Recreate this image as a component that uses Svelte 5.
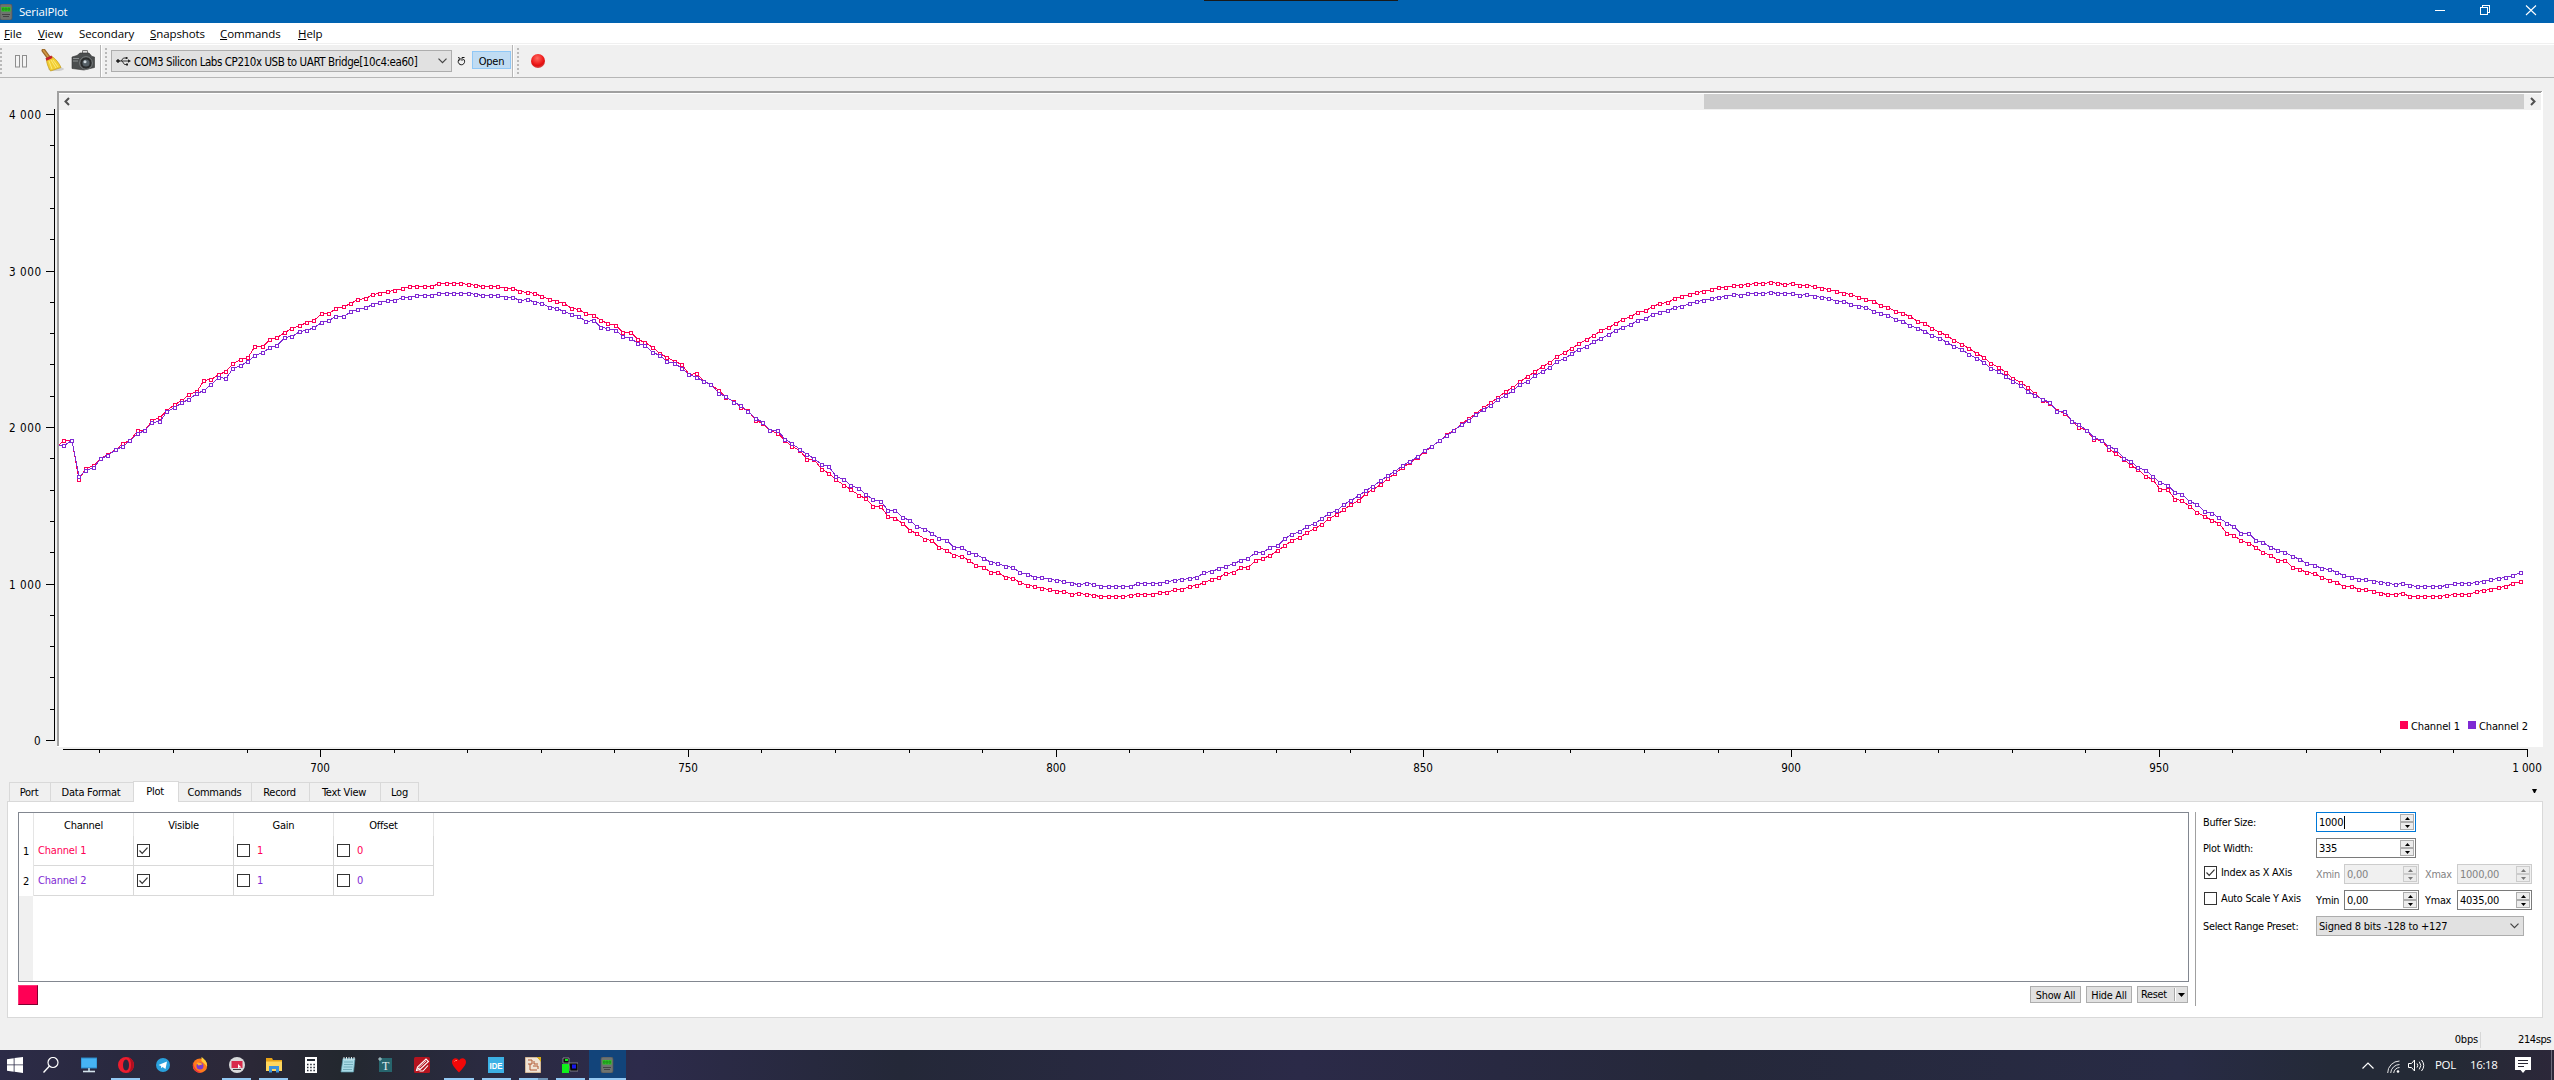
<script>
  const RED = '#ff0055';
  const PURPLE = '#7f2ad4';

  const menu = [
    ['F', 'ile', 34], ['V', 'iew', 41], ['', 'Secondary', 71],
    ['S', 'napshots', 70], ['C', 'ommands', 78], ['H', 'elp', 40]
  ];
  const tabs = [
    ['Port', 41], ['Data Format', 83], ['Plot', 46], ['Commands', 73],
    ['Record', 58], ['Text View', 71], ['Log', 39]
  ];
  const channels = [
    { id: 1, name: 'Channel 1', cls: 'red' },
    { id: 2, name: 'Channel 2', cls: 'purple' }
  ];

  // Recorded blocks: first sample index, base line, offsets in thirds of a pixel.
  const redBlocks = [
    [665, 240, '603 603 719 688 678 658 646 631 611 602 573 572 543 534 513 495 483 465 457 423 419 405 396 372 360 354 321 322 300 294 279 267 258 249 243 222 222 207 201 192 180 177 165 162 156 153 147 141 141 141 141 132 132 132 132 135 138 141 141 141 147 147 156 159 162 171 180 186 192 207 210 222 228 243 252 258 279 279 300'],
    [744, 270, '219 234 252 264 276 285 314 312 336 345 363 384 396 414 423 453 462 483 492 513 531 543 570 570 600 612 630 648 660 678 687 711 711 741 747 762 783 792 810 813 834 843 858 861 873 888 894 909 909 924 927 939 948 951 957 960 966 966 975 972 975 978 981 981 981 981 978 975 975 975 969 969 960 960 951 948 939 930 924 912 909 894 894 873 867 858 843'],
    [934, 400, '3 12 33 42 66 84 93 120 123 150 162 180 198 210 231 240 270 270 300 303 321 339 351 363 372 402 408 423 432 444 459 468 483 483 504 510 519 522 534 543 549 561 561 570 570 576 582 585 585 582 591 591 591 591 591 588 585 585 585 576 573 570 564 561 552 546']
  ];
  const purpleBlocks = [
    [665, 240, '618 603 711 693 684 657 648 630 621 603 582 573 549 546 516 504 489 480 462 453 435 414 417 387 378 366 348 339 324 318 294 291 276 273 264 249 243 231 231 216 210 204 195 189 183 183 174 174 168 168 168 162 162 162 162 162 165 168 168 168 174 174 183 180 189 192 204 207 216 225 231 246 243 264 267 273 291 297 312'],
    [744, 270, '228 249 258 276 282 297 315 324 336 345 372 381 399 408 426 447 459 483 483 510 522 540 555 567 585 591 621 630 648 657 675 690 696 723 723 744 753 771 780 792 807 813 834 834 849 855 867 879 882 891 894 909 915 924 924 930 933 936 942 945 942 945 951 951 951 951 951 942 942 942 942 936 933 930 927 924 909 906 897 891 882 873 867 849 849 834 828'],
    [934, 400, '0 9 36 36 66 75 93 114 123 141 150 177 186 204 213 231 249 258 279 285 306 315 336 342 354 372 381 402 402 423 429 444 453 459 471 480 492 498 507 510 519 528 534 540 540 546 549 552 555 552 558 561 561 561 561 558 552 552 552 549 546 540 537 534 528 519']
  ];

  const px = (i) => Math.round(64.2 + (i - 665) * 7.355);

  function series(blocks, centre, amp, seed) {
    const known = new Map();
    for (const [start, base, text] of blocks) {
      text.split(' ').forEach((v, k) => known.set(start + k, Math.round(base + v / 3)));
    }
    const pts = [];
    for (let i = 665; i < 1000; i++) {
      const wobble = Math.sin(i * 2.4 + seed) * 0.6;
      const y = known.get(i) ?? Math.round(centre - amp * Math.cos((2 * Math.PI * (i - 896.9)) / 179) + wobble);
      pts.push([px(i), y]);
    }
    return pts;
  }

  const plots = [
    { colour: RED, start: 446, pts: series(redBlocks, 440.3, 156.5, 0) },
    { colour: PURPLE, start: 446, pts: series(purpleBlocks, 440.2, 146.5, 1) }
  ];
  const line = (p) => [[58, p.start], ...p.pts].map(([x, y]) => `${x},${y - 0.5}`).join(' ');
  const marks = (p) => p.pts.map(([x, y]) => `M${x - 1.5} ${y - 1.5}h3v3h-3z`).join('');

  const yTicks = Array.from({ length: 21 }, (_, k) => ({ y: Math.round(740 - k * 31.3) + 0.5, major: k % 5 === 0, v: k / 5 }));
  const xTicks = Array.from({ length: 34 }, (_, k) => {
    const v = 670 + k * 10;
    return { x: Math.round(62.7 + (v - 665) * 7.355) + 0.5, major: v % 50 === 0, v };
  });

  const taskIcons = [
    ['start'], ['search'], ['pc'], ['opera', 1], ['telegram'], ['firefox'], ['rec', 1], ['folder', 1],
    ['calc'], ['notes'], ['t'], ['pen'], ['heart', 1], ['ide', 1], ['eda', 2], ['term', 1], ['serial', 3]
  ];
</script>

{#snippet check(on)}
  <svg class="check" width="13" height="13" viewBox="0 0 13 13">
    <rect x=".5" y=".5" width="12" height="12" fill="#fff" stroke="#333" />
    {#if on}<path d="M2.5 6.5l2.7 2.8L10.5 3.6" fill="none" stroke="#333" stroke-width="1.2" />{/if}
  </svg>
{/snippet}

{#snippet spin(value, cls)}
  <div class="spin {cls}">
    <span>{value}{#if cls === 'focus wide'}<i class="caret"></i>{/if}</span>
    <div class="arrows">
      <b><svg width="5" height="3"><path d="M0 3L2.5 0L5 3z" /></svg></b>
      <b><svg width="5" height="3"><path d="M0 0L2.5 3L5 0z" /></svg></b>
    </div>
  </div>
{/snippet}

{#snippet meter()}
  <rect x="2" y="0" width="12" height="16" rx="2" fill="#6f7470" stroke="#555" stroke-width=".7" />
  <rect x="3.500" y="3" width="9" height="4.500" fill="#2fc626" />
  <path d="M4.500 4.200h1.500v2H4.500zM7.200 4.200h1.500v2H7.200zM10 4.200h1.500v2H10z" fill="none" stroke="#1a7a18" stroke-width=".6" />
  <path d="M4 10.500h8M5 12.500h6" stroke="#444" stroke-width="1.200" />
{/snippet}

<div class="window">
  <header class="title">
    <svg class="appicon" width="13" height="16" viewBox="2 0 13 16">{@render meter()}</svg>
    <span>SerialPlot</span>
    <i class="strip"></i>
    <svg class="winbtns" width="110" height="23" viewBox="0 0 110 23" fill="none" stroke="#fff" shape-rendering="crispEdges">
      <path d="M4 10.5h10" />
      <path d="M49.5 7.5h7v7h-7zM51.5 7V5.5h7v7H57" />
      <path d="M95 5.500l10 9.500M105 5.500l-10 9.500" shape-rendering="auto" stroke-width="1.1" />
    </svg>
  </header>

  <nav class="menu">
    {#each menu as [u, rest, w]}
      <span class="item" style="width:{w}px"><u>{u}</u>{rest}</span>
    {/each}
  </nav>

  <div class="toolbar">
    <div class="bar first">
      <i class="grip"></i>
      <svg class="pause" width="13" height="13" viewBox="0 0 13 13" fill="#f4f4f4" stroke="#8e8e8e"><rect x=".5" y=".5" width="4" height="11.500" /><rect x="7.500" y=".5" width="4" height="11.500" /></svg>
      <svg class="broom" width="23" height="23" viewBox="0 0 23 23">
        <ellipse cx="15" cy="20" rx="8" ry="2" fill="#cfcfcf" />
        <path d="M2.500 1.500L8 9" stroke="#9c6a2a" stroke-width="4" stroke-linecap="round" />
        <path d="M2.500 1.500L7 7.500" stroke="#d49a45" stroke-width="1.5" stroke-linecap="round" />
        <path d="M5.500 10L11 7.500C15 10 18 14 20 18.500L9.500 22C7 18 5.500 14 5.500 10z" fill="#f1cd33" stroke="#c39a16" stroke-width=".7" />
        <path d="M8 12l3 8M10 11l5 8M12 11l5 7" stroke="#fff08a" stroke-width=".8" />
        <path d="M5 10.500L11 7.800" stroke="#c2222a" stroke-width="2.600" />
      </svg>
      <svg class="camera" width="24" height="23" viewBox="0 0 24 23">
        <path d="M11.500 5V1.500h5V5" fill="#ddd" stroke="#777" />
        <path d="M1 8l5-1.500L9 4h9l3 3.500 2.500.5v10.500L13 21 1 19.500z" fill="#4b4e4f" stroke="#333" stroke-width=".6" />
        <path d="M2 9.500h6M2 12h5" stroke="#8b8f90" />
        <circle cx="15" cy="14" r="6.300" fill="#2b2d2e" stroke="#7f8485" />
        <circle cx="15" cy="14" r="3.600" fill="#555f66" />
        <circle cx="14" cy="12.800" r="1.500" fill="#cfd8dd" />
      </svg>
    </div>
    <div class="bar second">
      <i class="grip"></i>
      <div class="combo port">
        <svg class="usb" width="15" height="9" viewBox="0 0 15 9" fill="none" stroke="#222"><circle cx="2" cy="4" r="1.300" fill="#222" /><path d="M2 4h10M5 4l2.500-3h2M6 4l2.500 3.500h2" stroke-width=".9" /><path d="M12 2.300L15 4l-3 1.700z" fill="#222" stroke="none" /><path d="M9.500 0h2v2h-2zM10 6.500h2v2h-2z" fill="#222" stroke="none" /></svg>
        <span>COM3 Silicon Labs CP210x USB to UART Bridge[10c4:ea60]</span>
        <svg class="chev" width="9" height="6" viewBox="0 0 9 6"><path d="M.5.700l4 4 4-4" fill="none" stroke="#444" stroke-width="1.200" /></svg>
      </div>
      <svg class="reload" width="9" height="10" viewBox="0 0 9 10"><path d="M6.300 3A3.200 3.200 0 1 1 2.500 3M1 1.500l2.200.9-.5 2.200M5 4.800V1.500h2.500" fill="none" stroke="#111" /></svg>
      <span class="open">Open</span>
    </div>
    <div class="bar third">
      <i class="grip"></i>
      <i class="record"></i>
    </div>
  </div>

  <svg class="plot" width="2554" height="703" viewBox="0 78 2554 703" shape-rendering="crispEdges">
    <rect x="57" y="91" width="2486" height="656" fill="#fff" />
    <path d="M57 91h2485v1h-2483v654h-2z" fill="#a0a0a0" />
    <path d="M59 92h2482v1H59z" fill="#a0a0a0" />
    <rect x="59" y="94" width="2482" height="16" fill="#f0f0f0" />
    <rect x="1704" y="94" width="820" height="15" fill="#cdcdcd" />
    <path d="M69 98l-3.500 3.500L69 105M2531 98l3.500 3.500L2531 105" fill="none" stroke="#505050" stroke-width="2" shape-rendering="auto" />
    <path d="M54.500 109V741M63 749.500H2528" stroke="#000" />
    {#each yTicks as t}
      <path d="M{t.major ? 46 : 50} {t.y}H54" stroke="#000" />
      {#if t.major && t.v}<text class="ax" x="9" y={t.y + 4.500} textLength="32">{t.v} 000</text>{/if}
    {/each}
    <text class="ax" x="34" y="745">0</text>
    {#each xTicks as t}
      <path d="M{t.x} 749V{t.major ? 757 : 753}" stroke="#000" />
      {#if t.major}<text class="ax" x={t.x - 0.5} y="772" text-anchor="middle">{t.v === 1000 ? '1 000' : t.v}</text>{/if}
    {/each}
    {#each plots as p}
      <polyline points={line(p)} fill="none" stroke={p.colour} />
      <path d={marks(p)} fill="#fff" stroke={p.colour} />
    {/each}
    <rect x="57" y="110" width="2" height="636" fill="#a0a0a0" />
    <rect x="2400" y="721" width="8" height="8" fill={RED} />
    <rect x="2468" y="721" width="8" height="8" fill={PURPLE} />
    <text class="lg" x="2411" y="730" textLength="49">Channel 1</text>
    <text class="lg" x="2479" y="730" textLength="49">Channel 2</text>
  </svg>

  <div class="tabs">
    {#each tabs as [t, w]}
      <span class="tab" class:sel={t === 'Plot'} style="width:{w}px">{t}</span>
    {/each}
    <svg class="more" width="5" height="4"><path d="M0 0h5L3 4H2z" /></svg>
  </div>

  <section class="pane">
    <div class="left">
      <div class="table">
        <div class="row head"><b></b><span>Channel</span><span>Visible</span><span>Gain</span><span>Offset</span></div>
        {#each channels as c}
          <div class="row body {c.cls}">
            <b>{c.id}</b><span><em class="name">{c.name}</em></span><span>{@render check(true)}</span>
            <span>{@render check(false)}<em>1</em></span><span>{@render check(false)}<em>0</em></span>
          </div>
        {/each}
        <i class="gutter"></i>
      </div>
      <div class="actions">
        <i class="swatch"></i>
        <span class="btn show">Show All</span>
        <span class="btn hide">Hide All</span>
        <span class="btn reset">Reset<i></i><svg width="7" height="4"><path d="M0 0h7L3.500 4z" /></svg></span>
      </div>
    </div>
    <div class="form">
      <div class="frow"><label>Buffer Size:</label>{@render spin('1000', 'focus wide')}</div>
      <div class="frow"><label>Plot Width:</label>{@render spin('335', 'wide')}</div>
      <div class="frow dis"><label class="cb">{@render check(true)}Index as X AXis</label><label class="mm">Xmin</label>{@render spin('0,00', 'off')}<label class="mx">Xmax</label>{@render spin('1000,00', 'off')}</div>
      <div class="frow"><label class="cb">{@render check(false)}Auto Scale Y Axis</label><label class="mm">Ymin</label>{@render spin('0,00', '')}<label class="mx">Ymax</label>{@render spin('4035,00', '')}</div>
      <div class="frow"><label>Select Range Preset:</label>
        <div class="combo preset"><span>Signed 8 bits -128 to +127</span><svg class="chev" width="9" height="6" viewBox="0 0 9 6"><path d="M.5.700l4 4 4-4" fill="none" stroke="#444" stroke-width="1.200" /></svg></div>
      </div>
    </div>
  </section>

  <footer class="status"><span class="bps">0bps</span><span class="sps">214sps</span></footer>

  <div class="taskbar">
    <div class="apps">
      {#each taskIcons as [name, run]}
        <div class="app" class:run={run === 1 || run === 2} class:split={run === 2} class:active={run === 3}>
          <svg width="16" height="16" viewBox="0 0 16 16">
            {#if name === 'start'}
              <path d="M0 2.200L6.700 1.200v6.300H0zM7.500 1.100L16 0v7.500H7.500zM0 8.300h6.700v6.400L0 13.800zM7.500 8.300H16V16l-8.500-1.200z" fill="#fff" />
            {:else if name === 'search'}
              <circle cx="10" cy="5.500" r="5" fill="none" stroke="#fff" stroke-width="1.200" /><path d="M6.500 9L.5 15.500" stroke="#fff" stroke-width="1.400" />
            {:else if name === 'pc'}
              <rect x="0" y="1" width="16" height="10" fill="#46b4f4" stroke="#2a86c4" /><path d="M7 11h2v3H7z" fill="#9db8c8" /><path d="M2 14.500h12" stroke="#d5e3ec" stroke-width="1.600" />
            {:else if name === 'opera'}
              <path d="M8 0a8 8 0 0 0 0 16a8 8 0 0 0 0-16zM8 2.500c2 0 3 2.500 3 5.500s-1 5.500-3 5.500-3-2.500-3-5.500 1-5.500 3-5.500z" fill="#ee1d2e" fill-rule="evenodd" /><path d="M10 .3a8 8 0 0 1 0 15.400c2-1.500 3-4.200 3-7.700s-1-6.200-3-7.700z" fill="#b00f1f" />
            {:else if name === 'telegram'}
              <circle cx="8" cy="8" r="7" fill="#2aa0dc" /><path d="M3.500 8l8.500-3.500-1.500 7.500-3-2-1.300 1.300-.2-2.300z" fill="#fff" />
            {:else if name === 'firefox'}
              <circle cx="8" cy="8.700" r="7.200" fill="#ff7a1c" /><path d="M9.500 0c3 2 6 5 5.500 9.500C13 7 11 5 9.500 4z" fill="#ffce3a" /><path d="M1 5c1 7 4 9 9 10.800C4 16.500 0 12 1 5z" fill="#f0303f" /><circle cx="8" cy="9" r="3.500" fill="#7a3bd0" /><path d="M4.500 6c3-1 5 0 6 1.500-2 0-2.500 1-4 1z" fill="#ffb02e" />
            {:else if name === 'rec'}
              <circle cx="8" cy="8" r="8" fill="#d9dadb" /><rect x="2.500" y="4" width="11" height="7" fill="#d92b4b" /><path d="M9 7l3.500 3.500H10L9 12z" fill="#fff" /><path d="M4 12.500h8" stroke="#444" />
            {:else if name === 'folder'}
              <path d="M0 1h6l1 2h9v11H0z" fill="#e8a317" /><path d="M0 4.500h16V14H0z" fill="#ffd75e" /><path d="M3 9h10v6.500h-3V12H6v3.500H3z" fill="#3c93dc" />
            {:else if name === 'calc'}
              <path d="M2 0h12v16H2z" fill="#fff" /><path d="M4 3h8" stroke="#252b35" stroke-width="2" /><path d="M4 7.500h8M4 10.500h8M4 13.500h8" stroke="#252b35" stroke-width="1.500" stroke-dasharray="1.500 1.700" />
            {:else if name === 'notes'}
              <path d="M3 1.500h12L13.500 15H1z" fill="#a9dbe6" stroke="#5899a8" stroke-width=".7" /><path d="M4 5h9M4 7.500h9M3.500 10h9M3 12.500h9" stroke="#5a9ba8" stroke-width=".7" /><path d="M4 0v3M6.500 0v3M9 0v3M11.500 0v3M14 0v3" stroke="#dce4e6" />
            {:else if name === 't'}
              <rect x="2" y="1" width="13" height="14" fill="#27656d" /><text x="8.500" y="13" class="serifT" text-anchor="middle">T</text><path d="M3 0v4M1 2h4" stroke="#cfe3e6" stroke-width=".8" />
            {:else if name === 'pen'}
              <rect width="16" height="16" rx="1.500" fill="#b5141f" /><path d="M2.500 13.500l1-3.500L12 2l2.500 2.500L6 12.500zM4 11l2 1.500M5.500 14H9l5-5.500" fill="none" stroke="#fff" stroke-width="1.100" /><path d="M5 10.500l7-6.500" stroke="#fff" stroke-width=".8" />
            {:else if name === 'heart'}
              <path d="M8 15.500C4 11 1 8 1 5c0-4 5-5 7-1.500C10 0 15 1 15 5c0 3-3 6-7 10.500z" fill="#f10808" /><path d="M3.500 4.500q1-1.500 2.500-1" stroke="#ff8f7a" fill="none" />
            {:else if name === 'ide'}
              <rect width="16" height="16" fill="#3cb0e4" /><text x="1.500" y="11.500" class="ide" textLength="13" lengthAdjust="spacingAndGlyphs">IDE</text>
            {:else if name === 'eda'}
              <path d="M0 0h12l4 4v12H0z" fill="#efe3d5" stroke="#b48a5c" /><path d="M12 0h4v5z" fill="#d8ae17" /><path d="M3 3h4v4H3M5 7v6h7M8 9h5v3M9 4v3h4" fill="none" stroke="#b25832" />
            {:else if name === 'term'}
              <path d="M1 1h6v5H1z" fill="#0a0a0a" stroke="#dfdfdf" stroke-width=".5" /><path d="M3 2h3v2H3zM0 7h7v9H0z" fill="#0ff01a" /><path d="M7 6h9v8H8z" fill="#080808" stroke="#ccc" stroke-width=".5" /><path d="M10 7.500h4v4h-4z" fill="#1717e8" />
            {:else}
              {@render meter()}
            {/if}
          </svg>
        </div>
      {/each}
    </div>
    <div class="tray">
      <svg class="up" width="12" height="7" viewBox="0 0 12 7"><path d="M.5 6.500L6 1l5.500 5.500" fill="none" stroke="#fff" stroke-width="1.200" /></svg>
      <svg class="wifi" width="13" height="13" viewBox="0 0 13 13" fill="none" stroke="#e6e6e6"><path d="M.7 13A12 12 0 0 1 12.500 1M3.700 13a9 9 0 0 1 8.800-8.500M6.700 13a6 6 0 0 1 5.800-5.500" /><circle cx="11" cy="11.500" r="1.300" fill="#fff" stroke="none" /></svg>
      <svg class="vol" width="17" height="13" viewBox="0 0 17 13" fill="none" stroke="#fff"><path d="M.5 4.500h3l3-3.500v11l-3-3.500h-3zM9 4.500q1.500 2 0 4M11.300 2.700q3 3.800 0 7.600M13.500 1q4.500 5.500 0 11" /></svg>
      <span class="pol">POL</span>
      <span class="clock">16:18</span>
      <svg class="note" width="16" height="16" viewBox="0 0 16 16"><path d="M0 0h16v13h-5.500L8 16l-2.500-3H0z" fill="#fff" /><path d="M3 3.500h10M3 6.500h10M3 9.500h6" stroke="#282633" /></svg>
    </div>
  </div>
</div>

<style>
  :global(body) { margin: 0; }
  .window { width: 2554px; height: 1080px; overflow: hidden; display: flex; flex-direction: column; background: #f0f0f0; color: #000; font: 10.800px/13px 'DejaVu Sans Condensed', 'DejaVu Sans', sans-serif; font-stretch: condensed; letter-spacing: -0.25px; white-space: nowrap; }
  svg { flex: none; display: block; }
  .title { height: 23px; background: #0063b1; color: #fff; display: flex; align-items: center; position: relative; font: 11.500px/23px 'Open Sans', sans-serif; letter-spacing: -0.2px; }
  .title span { margin-left: 6px; }
  .strip { position: absolute; left: 1204px; top: 0; width: 194px; height: 1px; background: #191919; }
  .winbtns { margin-left: auto; margin-right: 13px; }
  .menu { height: 20px; background: #fff; border-bottom: 1px solid #f0f0f0; box-shadow: 0 1px #fff; display: flex; padding-left: 4px; font: 11.500px/22px 'Open Sans', sans-serif; letter-spacing: -0.1px; }
  .item { flex: none; }
  .toolbar { height: 32px; margin-top: 1px; border-bottom: 1px solid #b6b6b6; display: flex; }
  .bar { display: flex; align-items: center; box-sizing: border-box; border-right: 1px solid #b6b6b6; box-shadow: 1px 0 #fff; }
  .first { width: 101px; }
  .second { width: 412px; padding-left: 4px; }
  .third { border: 0; box-shadow: none; padding-left: 4px; }
  .grip { width: 2px; height: 26px; background: repeating-linear-gradient(#b9b9b9 0 2px, transparent 2px 4px); flex: none; }
  .pause { margin-left: 13px; }
  .broom { margin-left: 13px; margin-top: -2px; }
  .camera { margin-left: 7px; margin-top: -1px; }
  .combo { box-sizing: border-box; background: #e1e1e1; border: 1px solid #adadad; display: flex; align-items: center; }
  .combo .chev { margin-left: auto; margin-right: 4px; }
  .port { width: 341px; height: 22px; margin-left: 4px; padding-left: 4px; font-size: 11.500px; letter-spacing: -0.430px; }
  .port span { margin-left: 3px; padding-top: 2px; }
  .reload { margin-left: 5px; }
  .open { box-sizing: border-box; width: 39px; height: 18px; margin-left: 6px; margin-top: -2px; border: 1px solid #90c8f6; background: #c0dcf3; text-align: center; line-height: 20px; font-size: 11px; }
  .record { width: 14px; height: 14px; margin-left: 12px; border-radius: 50%; background: radial-gradient(circle at 45% 30%, #ff6a60, #f02020 45%, #e01010 60%, #c88); }
  .ax { font-size: 11.600px; letter-spacing: -0.1px; }
  .lg { font-size: 11px; letter-spacing: 0; }
  .tabs { height: 21px; margin-top: -1px; display: flex; align-items: flex-end; padding-left: 9px; position: relative; z-index: 1; }
  .tab { box-sizing: border-box; height: 19px; margin-bottom: 0; border: 1px solid #d9d9d9; border-right: 0; border-bottom: 0; text-align: center; line-height: 20px; font-size: 11px; padding-right: 2px; flex: none; }
  .tab:nth-last-child(2) { border-right: 1px solid #d9d9d9; padding-right: 0; }
  .tab.sel { height: 21px; margin-bottom: -1px; background: #fff; border-right: 1px solid #d9d9d9; margin-right: -1px; width: 47px; }
  .tab.sel + .tab { border-left: 0; padding-right: 0; }
  .more { margin-left: auto; margin-right: 17px; margin-bottom: 8px; }
  .pane { box-sizing: border-box; width: 2536px; height: 217px; margin-left: 7px; border: 1px solid #d9d9d9; background: #fff; display: flex; padding: 10px 0 0 10px; }
  .left { width: 2171px; flex: none; }
  .table { box-sizing: border-box; width: 2171px; height: 170px; border: 1px solid #828790; display: flex; flex-direction: column; }
  .row { display: flex; flex: none; }
  .row > * { box-sizing: border-box; border-right: 1px solid #d9d9d9; width: 100px; flex: none; }
  .row b { width: 15px; font-weight: normal; color: #000; border-color: #e5e5e5; }
  .head { height: 23px; text-align: center; line-height: 25px; font-size: 11px; }
  .head span { border-color: #e5e5e5; }
  .body { height: 30px; line-height: 31px; font-size: 11px; }
  .body > * { display: flex; align-items: center; padding-left: 3px; }
  .body > span { border-bottom: 1px solid #d9d9d9; }
  .body b { padding-left: 4px; }
  .body em { font-style: normal; margin-left: 7px; }
  .body .name { margin-left: 1px; letter-spacing: -0.200px; }
  .red { color: #ff0055; }
  .purple { color: #7f2ad4; }
  .gutter { width: 14px; flex: 1; background: #f0f0f0; }
  .actions { display: flex; margin-top: 3px; padding-right: 1px; }
  .swatch { box-sizing: border-box; width: 20px; height: 20px; background: #ff0055; border: 1px solid #ff3377; border-right-color: #800030; border-bottom-color: #800030; margin-right: auto; }
  .btn { box-sizing: border-box; height: 17px; margin-top: 1px; border: 1px solid #adadad; background: #e1e1e1; text-align: center; line-height: 17px; font-size: 10.800px; }
  .show { width: 51px; margin-right: 5px; }
  .hide { width: 46px; margin-right: 5px; }
  .reset { width: 51px; display: flex; align-items: center; padding-left: 3px; }
  .reset i { width: 1px; height: 13px; background: #a8a8a8; border-right: 1px solid #fff; margin: 0 2px 0 auto; }
  .reset svg { margin-right: 2px; }
  .form { margin-left: 6px; height: 194px; border-left: 1px solid #a0a0a0; padding-left: 7px; }
  .frow { height: 20px; margin-bottom: 6px; display: flex; align-items: center; }
  .frow label { width: 113px; line-height: 22px; padding-top: 2px; flex: none; }
  .frow .cb { display: flex; align-items: center; padding: 0; margin-top: -3px; height: 17px; width: 112px; padding-left: 1px; }
  .cb .check { margin-right: 4px; }
  .frow .mm { width: 28px; }
  .frow .mx { width: 32px; box-sizing: border-box; padding-left: 6px; margin-right: 6px; }
  .dis label:not(.cb) { color: #838383; }
  .spin { box-sizing: border-box; width: 75px; height: 20px; border: 1px solid #7a7a7a; background: #fff; display: flex; justify-content: space-between; padding: 1px 1px 1px 2px; font-size: 11px; line-height: 18px; flex: none; }
  .wide { width: 100px; }
  .focus { border-color: #0078d7; }
  .off { background: #f0f0f0; border-color: #ccc; color: #838383; }
  .off svg { fill: #777; }
  .caret { display: inline-block; width: 1px; height: 13px; background: #000; vertical-align: -3px; margin-left: 1px; }
  .arrows { width: 14px; display: flex; flex-direction: column; }
  .arrows b { box-sizing: border-box; height: 8px; border: 1px solid #adadad; background: #ececec; display: flex; align-items: center; justify-content: center; }
  .off .arrows b { border-color: #ccc; }
  .preset { width: 208px; height: 20px; padding-left: 2px; font-size: 11px; letter-spacing: -0.200px; }
  .preset span { padding-top: 1px; }
  .status { height: 32px; box-sizing: border-box; padding-top: 14px; display: flex; justify-content: flex-end; font-size: 11px; line-height: 16px; letter-spacing: -0.200px; }
  .bps { padding-right: 2px; border-right: 1px solid #d7d7d7; margin-right: 37px; height: 16px; }
  .sps { width: 36px; letter-spacing: -0.400px; }
  .taskbar { height: 30px; flex: none; display: flex; justify-content: space-between; background: linear-gradient(90deg, #2c2b47, #29293f 120px, #2c2838 240px, #23282f 340px, #2a2a40 480px, #2d2b4b 640px, #242838 900px, #2b2a48 1300px, #25283a 1700px, #282b45 2180px, #242a38 2330px, #242a35 2450px, #2c2739); }
  .apps { display: flex; padding-left: 0; }
  .app { box-sizing: border-box; width: 37.060px; height: 30px; display: flex; align-items: flex-start; justify-content: center; padding-top: 7px; position: relative; }
  .app:first-child { width: 33px; padding-right: 4px; }
  .app:nth-child(2) { width: 37px; padding-right: 2px; }
  .run::after, .active::after { content: ''; position: absolute; left: 4px; right: 4px; bottom: 0; height: 2px; background: #94c9f3; }
  .split::after { background: linear-gradient(90deg, #94c9f3 19px, #6f94b6 19px); }
  .active { background: #12447a; }
  .active::after { left: 0; right: 0; }
  .serifT { font: 12px 'Liberation Serif', serif; fill: #e1eef0; }
  .ide { font: bold 8.500px 'Liberation Sans', sans-serif; fill: #fff; letter-spacing: 0; }
  .tray { display: flex; align-items: center; box-sizing: border-box; height: 30px; margin-right: 2px; border-right: 1px solid #6c6a7a; color: #fff; font: 11.500px/30px 'Open Sans', sans-serif; letter-spacing: -0.35px; }
  .wifi { margin-left: 13px; margin-top: 3px; }
  .vol { margin-left: 8px; }
  .pol { width: 26px; margin-left: 10px; }
  .clock { width: 35px; margin-left: 9px; }
  .note { margin: 0 20px 0 10px; }
</style>
